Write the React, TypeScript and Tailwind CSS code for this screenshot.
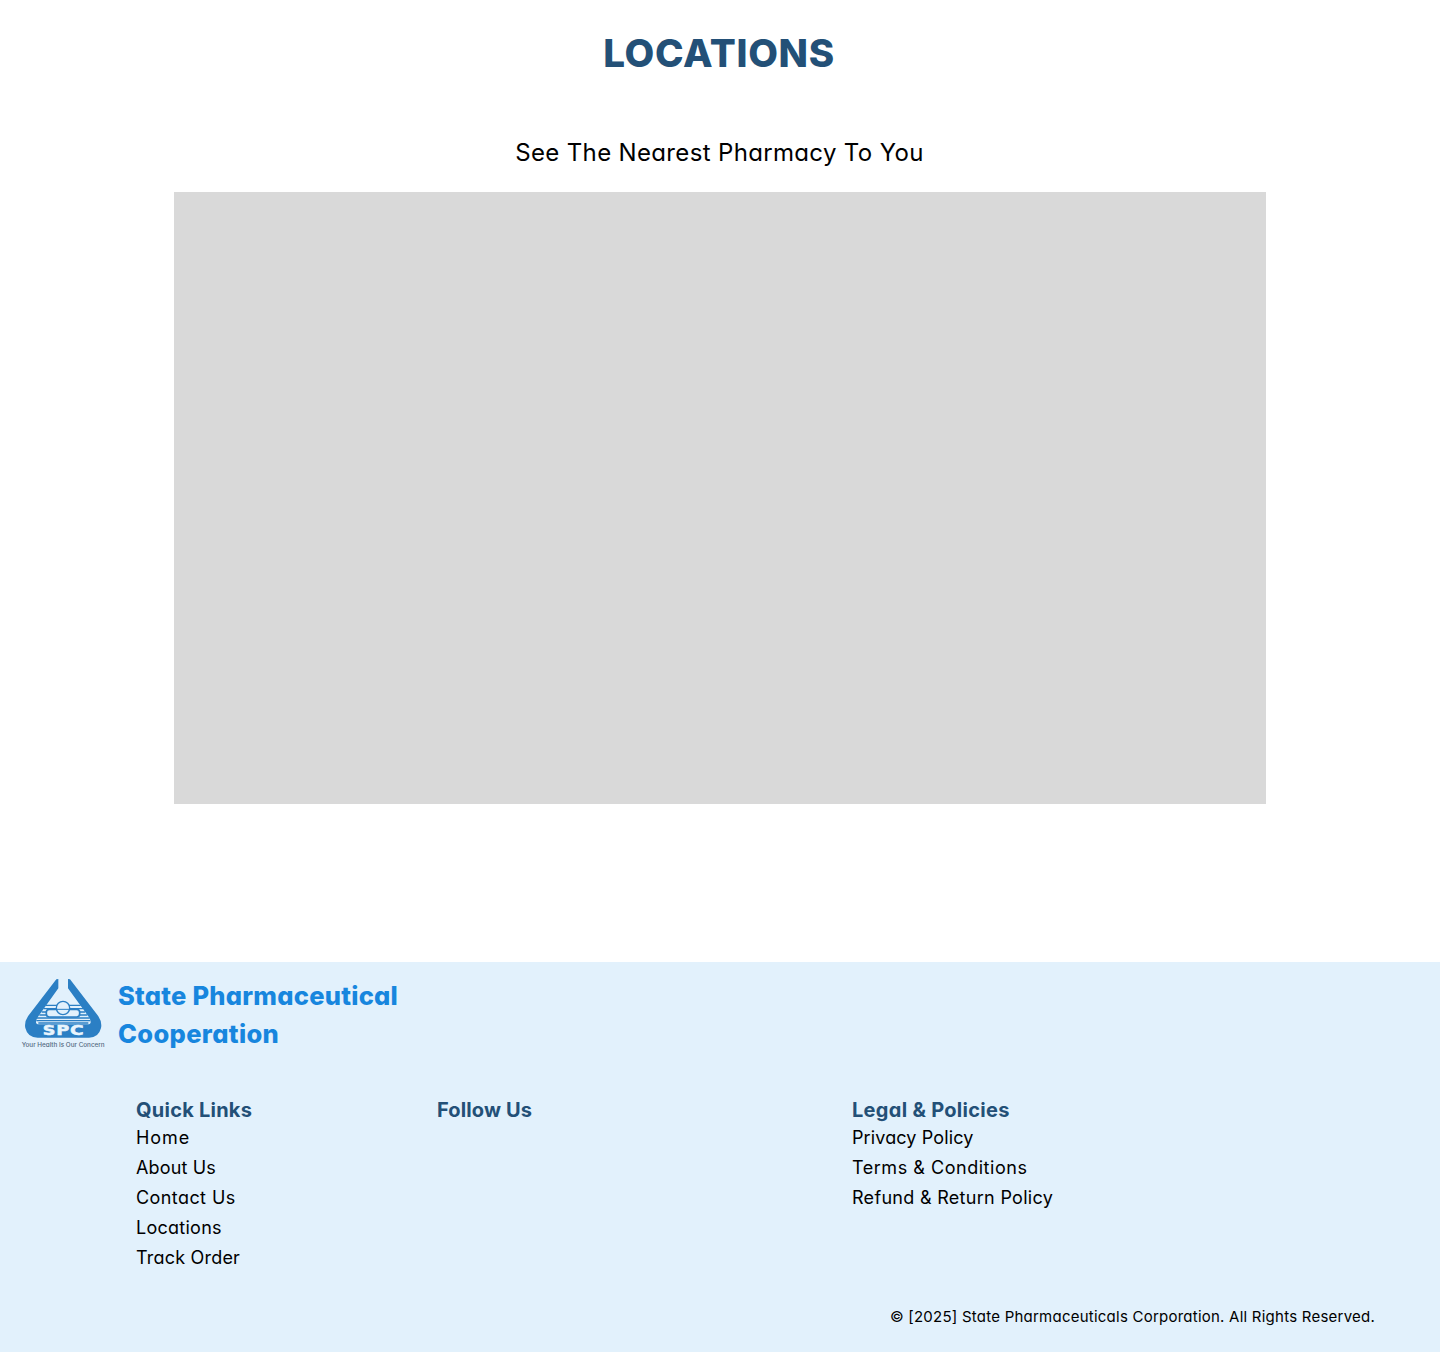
function Logo() {
  return (
    <svg viewBox="0 0 300 255" className="h-[85px] w-[100px] shrink-0" aria-label="SPC">
      <path
        d="M124 28 L130 27 L130 55 L68 142 Q56 163 72 163 L218 163 Q234 163 222 142 L159 55 L159 27 L165 28 L249 137 Q262 156 258 174 Q251 203 222 203 L68 203 Q38 203 31 174 Q27 156 40 137 Z"
        fill="#2b7fc4"
      />
      <path
        d="M93 106H197M86 116H204M80 126H210M73 135H217M66 144H224M64 152H226"
        stroke="#2b7fc4"
        strokeWidth="4"
      />
      <path d="M70 159H220" stroke="#2b7fc4" strokeWidth="5" />
      <rect x="94" y="118" width="100" height="23" rx="9" fill="#e2f1fc" stroke="#2b7fc4" strokeWidth="5" />
      <circle cx="144" cy="114" r="20" fill="#e2f1fc" stroke="#2b7fc4" strokeWidth="4" />
      <path d="M107 118H181" stroke="#2b7fc4" strokeWidth="3" />
      <g fontFamily="DejaVu Sans" fontSize="41" fontWeight="700" fill="#e9f5fd" stroke="#e9f5fd" strokeWidth="1.5">
        <text x="83" y="196" textLength="38" lengthAdjust="spacingAndGlyphs">S</text>
        <text x="124" y="196" textLength="39" lengthAdjust="spacingAndGlyphs">P</text>
        <text x="165" y="196" textLength="41" lengthAdjust="spacingAndGlyphs">C</text>
      </g>
      <text x="20" y="231" fontSize="17.5" fontWeight="500" textLength="249" lengthAdjust="spacingAndGlyphs" fill="#52697f">
        Your Health Is Our Concern
      </text>
    </svg>
  );
}

const heading = "h-[27px] text-[20px] leading-[28px] font-bold text-[#235077]";

export default function App() {
  return (
    <div className="flex min-h-[1352px] w-[1440px] flex-col bg-white font-['Inter',sans-serif] text-black [font-feature-settings:'cv11'] whitespace-nowrap">
      <main className="flex h-[962px] flex-col items-center pt-[23px]">
        <h1 className="pr-[2px] text-[38.5px] leading-[61px] font-extrabold tracking-[0.65px] text-[#235077]">LOCATIONS</h1>
        <p className="mt-[51px] pr-px text-[24px] leading-9 tracking-[0.34px]">See The Nearest Pharmacy To You</p>
        <div className="mt-[21px] h-[612px] w-[1092px] bg-[#d9d9d9]" />
      </main>
      <footer className="flex h-[390px] flex-col bg-[#e2f1fc]">
        <div className="flex h-[134px] items-start pt-2 pl-[15px]">
          <Logo />
          <div className="mt-[7px] ml-[3px] text-[25.5px] leading-[38px] font-extrabold text-[#1786de]">
            <div className="tracking-[0.25px]">State Pharmaceutical</div>
            <div className="tracking-[0.35px]">Cooperation</div>
          </div>
        </div>
        <div className="grid h-[206px] grid-cols-[301px_415px_1fr] pl-[136px]">
          <section>
            <h2 className={`${heading} tracking-[0.24px]`}>Quick Links</h2>
            <ul className="text-[18px] leading-[30px]">
              <li className="tracking-[0.9px]">Home</li>
              <li className="tracking-[0.15px]">About Us</li>
              <li className="tracking-[0.42px]">Contact Us</li>
              <li className="tracking-[0.26px]">Locations</li>
              <li className="tracking-[0.2px]">Track Order</li>
            </ul>
          </section>
          <section>
            <h2 className={`${heading} tracking-[0.13px]`}>Follow Us</h2>
          </section>
          <section>
            <h2 className={`${heading} tracking-[0.3px]`}>Legal &amp; Policies</h2>
            <ul className="text-[18px] leading-[30px]">
              <li className="tracking-[0.12px]">Privacy Policy</li>
              <li className="tracking-[0.53px]">Terms &amp; Conditions</li>
              <li className="tracking-[0.3px]">Refund &amp; Return Policy</li>
            </ul>
          </section>
        </div>
        <p className="pr-[65px] text-right text-[15px] leading-[30px] tracking-[0.235px]">
          © [2025] State Pharmaceuticals Corporation. All Rights Reserved.
        </p>
      </footer>
    </div>
  );
}
